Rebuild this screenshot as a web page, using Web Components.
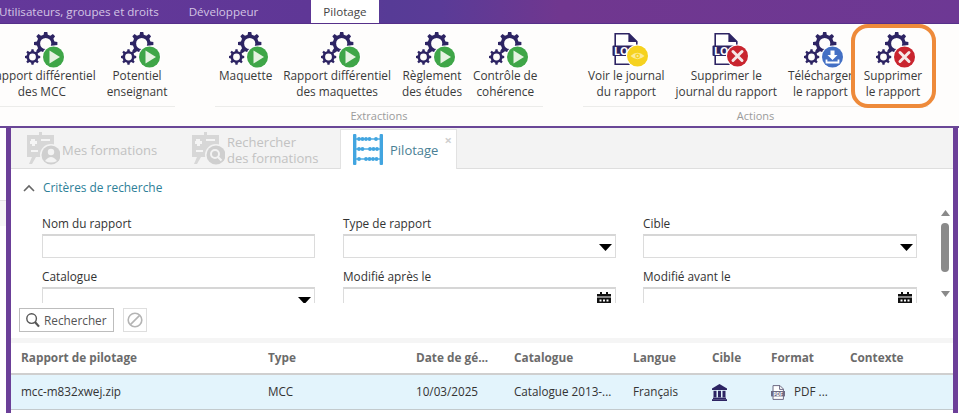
<!DOCTYPE html>
<html lang="fr">
<head>
<meta charset="utf-8">
<title>Pilotage</title>
<style>
html, body { margin: 0; height: 413px; width: 959px; overflow: hidden; background: #fff; font: 12px/16px "Open Sans", "Liberation Sans", sans-serif; color: #3a3a3a; }
</style>
</head>
<body>
<top-tabs>
	<top-tab style="margin-left:-1px;margin-right:30px">Utilisateurs, groupes et droits</top-tab>
	<top-tab style="margin-right:53px">Développeur</top-tab>
	<top-tab active>Pilotage</top-tab>
</top-tabs>

<ribbon-bar>
	<ribbon-group style="width:191px" pad="4">
		<ribbon-button icon="gear-play">Rapport différentiel<br>des MCC</ribbon-button>
		<ribbon-button icon="gear-play">Potentiel<br>enseignant</ribbon-button>
	</ribbon-group>
	<ribbon-group style="width:328px" pad="4" label="Extractions">
		<ribbon-button icon="gear-play">Maquette</ribbon-button>
		<ribbon-button icon="gear-play">Rapport différentiel<br>des maquettes</ribbon-button>
		<ribbon-button icon="gear-play">Règlement<br>des études</ribbon-button>
		<ribbon-button icon="gear-play">Contrôle de<br>cohérence</ribbon-button>
	</ribbon-group>
	<ribbon-group style="width:345px" pad="5" label="Actions">
		<ribbon-button icon="log-eye">Voir le journal<br>du rapport</ribbon-button>
		<ribbon-button icon="log-delete">Supprimer le<br>journal du rapport</ribbon-button>
		<ribbon-button icon="gear-download">Télécharger<br>le rapport</ribbon-button>
		<ribbon-button icon="gear-delete" marked>Supprimer<br>le rapport</ribbon-button>
	</ribbon-group>
</ribbon-bar>

<work-area>
	<panel-tabs>
		<panel-tab icon="board-user" style="width:165px">Mes formations</panel-tab>
		<panel-tab icon="board-search" style="width:164px">Rechercher<br>des formations</panel-tab>
		<panel-tab icon="abacus" active closable style="width:117px">Pilotage</panel-tab>
	</panel-tabs>
	<criteria-head>Critères de recherche</criteria-head>
	<search-form>
		<search-field label="Nom du rapport"></search-field>
		<search-field label="Type de rapport" kind="select"></search-field>
		<search-field label="Cible" kind="select" style="width:274px"></search-field>
		<search-field label="Catalogue" kind="select"></search-field>
		<search-field label="Modifié après le" kind="date"></search-field>
		<search-field label="Modifié avant le" kind="date" style="width:274px"></search-field>
	</search-form>
	<search-toolbar></search-toolbar>
	<grid-row head>
		<span>Rapport de pilotage</span><span>Type</span><span>Date de gé...</span><span>Catalogue</span><span>Langue</span><span>Cible</span><span>Format</span><span>Contexte</span>
	</grid-row>
	<grid-row selected>
		<span>mcc-m832xwej.zip</span><span>MCC</span><span>10/03/2025</span><span>Catalogue 2013-...</span><span>Français</span>
		<span style="display:flex;padding-top:2px"><ui-icon name="bank"></ui-icon></span>
		<span style="display:flex;align-items:center;gap:9px"><ui-icon name="pdf" style="margin-top:2px"></ui-icon>PDF ...</span>
		<span></span>
	</grid-row>
</work-area>

<script>
const NAVY = "#2d2463";

// outline of a gear, teeth included, with a round hole
function gear(cx, cy, outer, body, teeth, hole) {
	let d = "";
	const step = (Math.PI * 2) / teeth;
	for (let i = 0; i < teeth; i++) {
		const a = i * step;
		const pts = [
			[body, a - step * 0.3],
			[outer, a - step * 0.17],
			[outer, a + step * 0.17],
			[body, a + step * 0.3],
		];
		for (const [r, t] of pts) {
			d += (d ? "L" : "M") + (cx + r * Math.cos(t)).toFixed(2) + " " + (cy + r * Math.sin(t)).toFixed(2);
		}
	}
	d += `ZM${cx - hole} ${cy}a${hole} ${hole} 0 1 0 ${hole * 2} 0a${hole} ${hole} 0 1 0 ${-hole * 2} 0Z`;
	return `<path fill="${NAVY}" fill-rule="evenodd" d="${d}"/>`;
}

const gears = gear(20.7, 11.5, 11.8, 9, 8, 5.6) + gear(7.5, 25, 7.8, 6, 8, 3.4);

function badge(color, inner, cx = 28.5, cy = 25) {
	return `<circle cx="${cx}" cy="${cy}" r="11.5" fill="#fff"/><circle cx="${cx}" cy="${cy}" r="10.5" fill="${color}"/><g transform="translate(${cx} ${cy})">${inner}</g>`;
}

const PLAY = '<path d="M-4 -6.5L6.5 0L-4 6.5Z" fill="#e6f3e2"/>';
const CROSS = '<path d="M-4.5 -4.5L4.5 4.5M4.5 -4.5L-4.5 4.5" stroke="#f6e8e8" stroke-width="3" stroke-linecap="round"/>';
const DOWNLOAD = '<path d="M-2 -6.5H2V-2H5L0 3L-5 -2H-2Z" fill="#fff"/><path d="M-6 2.5V5.5H6V2.5" fill="none" stroke="#fff" stroke-width="1.8"/>';
const EYE = '<path d="M-7 0Q0 -6.5 7 0Q0 6.5 -7 0Z" fill="#fbeb9a"/><circle r="2.4" fill="#f6d21f"/><circle r="1.1" fill="#fbeb9a"/>';

const logDoc = `<path d="M5.2 1.8H19L26.8 9.5V32.2H5.2Z" fill="#fff" stroke="${NAVY}" stroke-width="1.6"/><path d="M18.4 1.5V10H27Z" fill="${NAVY}"/><rect x="2.5" y="13.5" width="22" height="10.5" rx="1" fill="${NAVY}"/><text x="4" y="22.6" font-family="Open Sans" font-weight="700" font-size="10.5" fill="#fff">LO</text>`;

const board = `<g fill="#d7d7d7"><rect x="12" y="0" width="3" height="4"/><rect x="0" y="3" width="27" height="22"/><path d="M5 25H9L5 32H2Z"/><path d="M15 25H19L20 30H16Z"/></g><path d="M4 7H8V9H10V12H8V14H5V12H3V9H4Z" fill="#fff" opacity=".75"/><path d="M14 7H23V9H14ZM4 18H11V20H4Z" fill="#fff" opacity=".75"/>`;
const boardUser = board + '<circle cx="24" cy="23" r="11" fill="#f3f3f3"/><circle cx="24" cy="23" r="9.5" fill="#cfcfcf"/><circle cx="24" cy="20" r="3.2" fill="#f3f3f3"/><path d="M18 29Q24 21 30 29Q24 32 18 29Z" fill="#f3f3f3"/>';
const boardSearch = board + '<circle cx="24" cy="23" r="11" fill="#f3f3f3"/><circle cx="24" cy="23" r="9.5" fill="#cfcfcf"/><circle cx="23" cy="22" r="4" fill="none" stroke="#f3f3f3" stroke-width="2"/><path d="M26 25L29.5 28.5" stroke="#f3f3f3" stroke-width="2.2"/>';

function abacus() {
	const blue = "#42a5e0";
	let s = `<rect x="0" y="0" width="3.4" height="31" rx="1" fill="${blue}"/><rect x="26.6" y="0" width="3.4" height="31" rx="1" fill="${blue}"/>`;
	const rows = [[5, [6, 9.5, 13, 16.5, 23]], [15, [6, 9.5, 17, 20.5, 24]], [25, [6, 13, 16.5, 20, 23.5]]];
	for (const [y, beads] of rows) {
		s += `<rect x="1" y="${y - 0.7}" width="28" height="1.4" fill="${blue}"/>`;
		for (const x of beads) s += `<circle cx="${x}" cy="${y}" r="1.9" fill="${blue}"/>`;
	}
	return s;
}

const ICONS = {
	"gear-play": [40, 37, gears + badge("#3fa648", PLAY)],
	"gear-delete": [40, 37, gears + badge("#c9252f", CROSS)],
	"gear-download": [40, 37, gears + badge("#4470c4", DOWNLOAD)],
	"log-eye": [40, 37, logDoc + badge("#f6d21f", EYE, 27.5, 24)],
	"log-delete": [40, 37, logDoc + badge("#c9252f", CROSS, 27.5, 24)],
	"board-user": [33, 34, boardUser],
	"board-search": [33, 34, boardSearch],
	abacus: [30, 31, abacus()],
	bank: [15, 17, `<g fill="${NAVY}"><path d="M7.5 0L15 4.5V6H0V4.5Z"/><rect x="1.5" y="6.8" width="3" height="6.6"/><rect x="6" y="6.8" width="3" height="6.6"/><rect x="10.5" y="6.8" width="3" height="6.6"/><rect x="1" y="13.6" width="13" height="1.4"/><rect x="0" y="15.2" width="15" height="1.8"/></g>`],
	pdf: [14, 15, `<path d="M2 .6H9L12.4 4V14.4H2Z" fill="#fff" stroke="#6d6a84"/><path d="M8.6 .6V4.4H12.4" fill="none" stroke="#6d6a84"/><rect x="0" y="6" width="14" height="5.4" fill="#6d6a84"/><text x="7" y="10.5" text-anchor="middle" font-family="Open Sans" font-weight="700" font-size="5" fill="#fff">PDF</text>`],
	search: [14, 15, `<circle cx="5.6" cy="5.6" r="4.8" fill="none" stroke="#555" stroke-width="1.4"/><path d="M9 9L13 13.6" stroke="#555" stroke-width="2.2"/>`],
	forbid: [16, 16, `<circle cx="8" cy="8" r="6.8" fill="none" stroke="#b4b4b4" stroke-width="1.6"/><path d="M3.4 12.6L12.6 3.4" stroke="#b4b4b4" stroke-width="1.6"/>`],
	caret: [13, 7, `<path d="M0 0H13L6.5 7Z" fill="#000"/>`],
	calendar: [14, 13, `<path d="M3 0H5V2H9V0H11V2H14V4.5H0V2H3Z" fill="#111"/><path d="M0 5.5H14V13H0ZM2.5 7.5V9.5H4.5V7.5ZM6 7.5V9.5H8V7.5ZM9.5 7.5V9.5H11.5V7.5Z" fill="#111" fill-rule="evenodd"/>`],
};

class UiIcon extends HTMLElement {
	connectedCallback() {
		const [w, h, body] = ICONS[this.getAttribute("name")];
		this.attachShadow({ mode: "open" }).innerHTML = `
			<style>:host { display: inline-flex; flex: none; } svg { display: block; }</style>
			<svg width="${w}" height="${h}" viewBox="0 0 ${w} ${h}" xmlns="http://www.w3.org/2000/svg">${body}</svg>`;
	}
}

class TopTabs extends HTMLElement {
	constructor() {
		super();
		this.attachShadow({ mode: "open" }).innerHTML = `
			<style>
				:host { display: flex; height: 24px; overflow: hidden; box-sizing: border-box; border-bottom: 1px solid #56308a;
					background: linear-gradient(90deg, #64389a 0, #5f3796 310px, #573b96 390px, #5a3b97 440px, #70378f 560px, #6d3894 959px); }
			</style>
			<slot></slot>`;
	}
}

class TopTab extends HTMLElement {
	constructor() {
		super();
		this.attachShadow({ mode: "open" }).innerHTML = `
			<style>
				:host { display: flex; align-items: center; height: 24px; white-space: nowrap; color: #d4c5e4; font-size: 11.6px; }
				:host([active]) { background: #fff; color: #444; padding: 0 12px; }
			</style>
			<slot></slot>`;
	}
}

class RibbonBar extends HTMLElement {
	constructor() {
		super();
		this.attachShadow({ mode: "open" }).innerHTML = `
			<style>
				:host { display: flex; gap: 40px; height: 102px; box-sizing: border-box; padding-top: 8px; margin-left: -16px; background: #fefdfc; }
			</style>
			<slot></slot>`;
	}
}

class RibbonGroup extends HTMLElement {
	connectedCallback() {
		const pad = this.getAttribute("pad") || 4;
		const label = this.getAttribute("label") || "";
		this.attachShadow({ mode: "open" }).innerHTML = `
			<style>
				:host { display: block; flex: none; }
				.row { display: flex; gap: 11px; padding-left: ${pad}px; height: 68px; }
				.name { margin-top: 6px; border-top: 1px solid #ececea; padding-top: 1px; text-align: center; font-size: 11px; line-height: 16px; color: #9b9b9b; }
			</style>
			<div class="row"><slot></slot></div>
			<div class="name">${label}</div>`;
	}
}

class RibbonButton extends HTMLElement {
	connectedCallback() {
		const marked = this.hasAttribute("marked") ? '<i class="mark"></i>' : "";
		this.attachShadow({ mode: "open" }).innerHTML = `
			<style>
				:host { display: flex; flex-direction: column; align-items: center; position: relative; white-space: nowrap; text-align: center; font-size: 11.8px; line-height: 16px; color: #3a3a3a; }
				ui-icon { height: 35px; margin-left: 7px; }
				.mark { position: absolute; top: -8px; bottom: -8px; left: -13px; right: -14px; border: 4px solid #ee8a3a; border-radius: 17px; }
			</style>
			<ui-icon name="${this.getAttribute("icon")}"></ui-icon>
			<div><slot></slot></div>${marked}`;
	}
}

class WorkArea extends HTMLElement {
	constructor() {
		super();
		this.attachShadow({ mode: "open" }).innerHTML = `
			<style>
				:host { display: flex; height: 287px; box-sizing: border-box; border-top: 2px solid #6a4797; }
				.side { flex: none; width: 6px; }
				.side i { display: block; margin-top: 72px; height: 25px; background: #f7f7f7; border-top: 1px solid #e4e4e4; }
				.panel { flex: none; width: 942px; border-left: 5px solid #6b3f98; border-right: 5px solid #6b3f98; }
			</style>
			<div class="side"><i></i></div>
			<div class="panel"><slot></slot></div>`;
	}
}

class PanelTabs extends HTMLElement {
	constructor() {
		super();
		this.attachShadow({ mode: "open" }).innerHTML = `
			<style>
				:host { display: flex; align-items: flex-end; height: 41px; box-sizing: border-box; background: #f3f3f3; border-bottom: 1px solid #dedede; }
			</style>
			<slot></slot>`;
	}
}

class PanelTab extends HTMLElement {
	connectedCallback() {
		const close = this.hasAttribute("closable") ? '<b class="close">×</b>' : "";
		this.attachShadow({ mode: "open" }).innerHTML = `
			<style>
				:host { display: flex; align-items: center; gap: 2px; position: relative; box-sizing: border-box; height: 39px; padding-left: 16px; font-size: 13px; line-height: 16px; color: #c2c2c2; white-space: nowrap; }
				:host([active]) { background: #fff; color: #4a7f95; border: 1px solid #e2e2e2; border-bottom: 0; height: 40px; margin-bottom: -1px; padding-left: 12px; gap: 7px; }
				.label { padding-top: 2px; }
				:host([active]) .label { padding-top: 1px; }
				.close { position: absolute; top: 2px; right: 4px; font-weight: 700; font-size: 13px; color: #cfcfcf; }
			</style>
			<ui-icon name="${this.getAttribute("icon")}"></ui-icon>
			<div class="label"><slot></slot></div>${close}`;
	}
}

class CriteriaHead extends HTMLElement {
	constructor() {
		super();
		this.attachShadow({ mode: "open" }).innerHTML = `
			<style>
				:host { display: flex; align-items: center; gap: 8px; height: 36px; box-sizing: border-box; padding: 0 0 0 12px; color: #2e8098; font-size: 11.9px; }
				svg { display: block; margin-top: 1px; }
			</style>
			<svg width="12" height="8" viewBox="0 0 12 8"><path d="M1 7L6 2L11 7" fill="none" stroke="#666" stroke-width="1.6"/></svg>
			<slot></slot>`;
	}
}

class SearchForm extends HTMLElement {
	constructor() {
		super();
		this.attachShadow({ mode: "open" }).innerHTML = `
			<style>
				:host { display: flex; height: 98px; overflow: hidden; box-sizing: border-box; }
				.grid { display: grid; grid-template-columns: 301px 300px 274px; row-gap: 11px; align-content: start; padding: 11px 0 0 31px; }
				.bar { display: flex; flex-direction: column; align-items: center; width: 10px; margin-left: auto; margin-right: 3px; padding-top: 5px; }
				.thumb { width: 8px; height: 49px; margin: 7px 0 19px; border-radius: 4px; background: #8a8a8a; }
				svg { display: block; flex: none; }
			</style>
			<div class="grid"><slot></slot></div>
			<div class="bar">
				<svg width="9" height="6" viewBox="0 0 9 6"><path d="M4.5 0L9 6H0Z" fill="#8a8a8a"/></svg>
				<div class="thumb"></div>
				<svg width="9" height="6" viewBox="0 0 9 6"><path d="M0 0H9L4.5 6Z" fill="#8a8a8a"/></svg>
			</div>`;
	}
}

class SearchField extends HTMLElement {
	connectedCallback() {
		const kind = this.getAttribute("kind");
		let tail = "";
		if (kind === "select") tail = '<ui-icon name="caret" class="tail" style="right:3px;top:8px"></ui-icon>';
		if (kind === "date") tail = '<ui-icon name="calendar" class="tail" style="right:4px;top:3px"></ui-icon>';
		this.attachShadow({ mode: "open" }).innerHTML = `
			<style>
				:host { display: block; width: 273px; font-size: 11.8px; color: #333; }
				label { display: block; box-sizing: border-box; height: 18px; line-height: 14px; }
				.box { position: relative; height: 24px; box-sizing: border-box; background: #fff; border: 1px solid #dcdcdc; border-top: 2px solid #d6d6d6; }
				.tail { position: absolute; }
			</style>
			<label>${this.getAttribute("label")}</label>
			<div class="box">${tail}</div>`;
	}
}

class SearchToolbar extends HTMLElement {
	constructor() {
		super();
		this.attachShadow({ mode: "open" }).innerHTML = `
			<style>
				:host { display: flex; gap: 9px; height: 24px; margin: 5px 0 6px; padding-left: 8px; }
				.btn { display: flex; align-items: center; box-sizing: border-box; height: 24px; border: 1px solid #bdbdbd; background: #fff; font-size: 11.8px; color: #555; }
				.go { width: 95px; gap: 4px; padding-left: 6px; }
				.no { width: 24px; justify-content: center; border-color: #dedede; }
			</style>
			<div class="btn go"><ui-icon name="search"></ui-icon>Rechercher</div>
			<div class="btn no"><ui-icon name="forbid"></ui-icon></div>`;
	}
}

class GridRow extends HTMLElement {
	constructor() {
		super();
		this.attachShadow({ mode: "open" }).innerHTML = `
			<style>
				:host { display: grid; grid-template-columns: 247px 148px 98px 119px 79px 59px 79px 1fr; align-items: center; padding-left: 10px; padding-bottom: 2px; white-space: nowrap; font-size: 11.7px; }
				:host([head]) { box-sizing: border-box; border-top: 5px solid #f5f5f5; height: 37px; border-bottom: 2px solid #cfcfcf; font-size: 11.8px; font-weight: 700; color: #6b6b6b; }
				:host([selected]) { height: 35px; box-sizing: border-box; background: #e3f4fc; border-bottom: 1px solid #c3cacd; color: #333; }
			</style>
			<slot></slot>`;
	}
}

customElements.define("ui-icon", UiIcon);
customElements.define("top-tabs", TopTabs);
customElements.define("top-tab", TopTab);
customElements.define("ribbon-bar", RibbonBar);
customElements.define("ribbon-group", RibbonGroup);
customElements.define("ribbon-button", RibbonButton);
customElements.define("work-area", WorkArea);
customElements.define("panel-tabs", PanelTabs);
customElements.define("panel-tab", PanelTab);
customElements.define("criteria-head", CriteriaHead);
customElements.define("search-form", SearchForm);
customElements.define("search-field", SearchField);
customElements.define("search-toolbar", SearchToolbar);
customElements.define("grid-row", GridRow);
</script>
</body>
</html>
